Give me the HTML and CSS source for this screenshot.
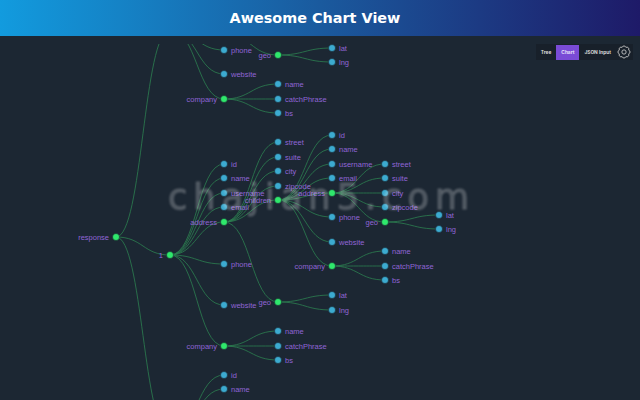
FILE: index.html
```html
<!DOCTYPE html>
<html lang="en">
<head>
<meta charset="utf-8">
<title>Awesome Chart View</title>
<link rel="stylesheet" href="styles.css">
</head>
<body>
<header class="topbar"><h1 class="title">Awesome Chart View</h1></header>
<main class="stage">
  <svg class="chart" viewBox="0 44 640 356" xmlns="http://www.w3.org/2000/svg">
    <g class="links">
      <path d="M116 237C143 237 143 30 170 30"/>
      <path d="M116 237C143 237 143 255 170 255"/>
      <path d="M116 237C143 237 143 434 170 434"/>
      <path d="M170 30C197 30 197 34 224 34"/>
      <path d="M170 30C197 30 197 50 224 50"/>
      <path d="M170 30C197 30 197 74 224 74"/>
      <path d="M170 30C197 30 197 99 224 99"/>
      <path d="M224 34C251 34 251 55 278 55"/>
      <path d="M278 55C305 55 305 48 332 48"/>
      <path d="M278 55C305 55 305 62 332 62"/>
      <path d="M224 99C251 99 251 84 278 84"/>
      <path d="M224 99C251 99 251 99 278 99"/>
      <path d="M224 99C251 99 251 113 278 113"/>
      <path d="M170 255C197 255 197 164 224 164"/>
      <path d="M170 255C197 255 197 178 224 178"/>
      <path d="M170 255C197 255 197 193 224 193"/>
      <path d="M170 255C197 255 197 207 224 207"/>
      <path d="M170 255C197 255 197 222 224 222"/>
      <path d="M170 255C197 255 197 264 224 264"/>
      <path d="M170 255C197 255 197 305 224 305"/>
      <path d="M170 255C197 255 197 346 224 346"/>
      <path d="M224 222C251 222 251 142 278 142"/>
      <path d="M224 222C251 222 251 157 278 157"/>
      <path d="M224 222C251 222 251 171 278 171"/>
      <path d="M224 222C251 222 251 186 278 186"/>
      <path d="M224 222C251 222 251 200 278 200"/>
      <path d="M224 222C251 222 251 302 278 302"/>
      <path d="M278 200C305 200 305 135 332 135"/>
      <path d="M278 200C305 200 305 149 332 149"/>
      <path d="M278 200C305 200 305 164 332 164"/>
      <path d="M278 200C305 200 305 178 332 178"/>
      <path d="M278 200C305 200 305 193 332 193"/>
      <path d="M278 200C305 200 305 217 332 217"/>
      <path d="M278 200C305 200 305 242 332 242"/>
      <path d="M278 200C305 200 305 266 332 266"/>
      <path d="M332 193C358.500 193 358.500 164 385 164"/>
      <path d="M332 193C358.500 193 358.500 178 385 178"/>
      <path d="M332 193C358.500 193 358.500 193 385 193"/>
      <path d="M332 193C358.500 193 358.500 207 385 207"/>
      <path d="M332 193C358.500 193 358.500 222 385 222"/>
      <path d="M385 222C412 222 412 215 439 215"/>
      <path d="M385 222C412 222 412 229 439 229"/>
      <path d="M332 266C358.500 266 358.500 251 385 251"/>
      <path d="M332 266C358.500 266 358.500 266 385 266"/>
      <path d="M332 266C358.500 266 358.500 280 385 280"/>
      <path d="M278 302C305 302 305 295 332 295"/>
      <path d="M278 302C305 302 305 310 332 310"/>
      <path d="M224 346C251 346 251 331 278 331"/>
      <path d="M224 346C251 346 251 346 278 346"/>
      <path d="M224 346C251 346 251 360 278 360"/>
      <path d="M170 434C197 434 197 375 224 375"/>
      <path d="M170 434C197 434 197 389 224 389"/>
    </g>
    <g class="branches">
      <circle cx="116" cy="237" r="3.500"/><circle cx="170" cy="255" r="3.500"/>
      <circle cx="278" cy="55" r="3.500"/><circle cx="224" cy="99" r="3.500"/>
      <circle cx="224" cy="222" r="3.500"/><circle cx="278" cy="200" r="3.500"/>
      <circle cx="332" cy="193" r="3.500"/><circle cx="385" cy="222" r="3.500"/>
      <circle cx="332" cy="266" r="3.500"/><circle cx="278" cy="302" r="3.500"/>
      <circle cx="224" cy="346" r="3.500"/>
    </g>
    <g class="leaves">
      <circle cx="224" cy="50" r="3.500"/><circle cx="224" cy="74" r="3.500"/>
      <circle cx="332" cy="48" r="3.500"/><circle cx="332" cy="62" r="3.500"/>
      <circle cx="278" cy="84" r="3.500"/><circle cx="278" cy="99" r="3.500"/><circle cx="278" cy="113" r="3.500"/>
      <circle cx="224" cy="164" r="3.500"/><circle cx="224" cy="178" r="3.500"/><circle cx="224" cy="193" r="3.500"/><circle cx="224" cy="207" r="3.500"/>
      <circle cx="224" cy="264" r="3.500"/><circle cx="224" cy="305" r="3.500"/>
      <circle cx="278" cy="142" r="3.500"/><circle cx="278" cy="157" r="3.500"/><circle cx="278" cy="171" r="3.500"/><circle cx="278" cy="186" r="3.500"/>
      <circle cx="332" cy="135" r="3.500"/><circle cx="332" cy="149" r="3.500"/><circle cx="332" cy="164" r="3.500"/><circle cx="332" cy="178" r="3.500"/>
      <circle cx="332" cy="217" r="3.500"/><circle cx="332" cy="242" r="3.500"/>
      <circle cx="385" cy="164" r="3.500"/><circle cx="385" cy="178" r="3.500"/><circle cx="385" cy="193" r="3.500"/><circle cx="385" cy="207" r="3.500"/>
      <circle cx="439" cy="215" r="3.500"/><circle cx="439" cy="229" r="3.500"/>
      <circle cx="385" cy="251" r="3.500"/><circle cx="385" cy="266" r="3.500"/><circle cx="385" cy="280" r="3.500"/>
      <circle cx="332" cy="295" r="3.500"/><circle cx="332" cy="310" r="3.500"/>
      <circle cx="278" cy="331" r="3.500"/><circle cx="278" cy="346" r="3.500"/><circle cx="278" cy="360" r="3.500"/>
      <circle cx="224" cy="375" r="3.500"/><circle cx="224" cy="389" r="3.500"/>
    </g>
    <g class="labels">
      <text x="231" y="52.500">phone</text><text x="231" y="76.500">website</text>
      <text x="339" y="50.500">lat</text><text x="339" y="64.500">lng</text>
      <text x="285" y="86.500">name</text><text x="285" y="101.500">catchPhrase</text><text x="285" y="115.500">bs</text>
      <text x="231" y="166.500">id</text><text x="231" y="180.500">name</text><text x="231" y="195.500">username</text><text x="231" y="209.500">email</text>
      <text x="231" y="266.500">phone</text><text x="231" y="307.500">website</text>
      <text x="285" y="144.500">street</text><text x="285" y="159.500">suite</text><text x="285" y="173.500">city</text><text x="285" y="188.500">zipcode</text>
      <text x="339" y="137.500">id</text><text x="339" y="151.500">name</text><text x="339" y="166.500">username</text><text x="339" y="180.500">email</text>
      <text x="339" y="219.500">phone</text><text x="339" y="244.500">website</text>
      <text x="392" y="166.500">street</text><text x="392" y="180.500">suite</text><text x="392" y="195.500">city</text><text x="392" y="209.500">zipcode</text>
      <text x="446" y="217.500">lat</text><text x="446" y="231.500">lng</text>
      <text x="392" y="253.500">name</text><text x="392" y="268.500">catchPhrase</text><text x="392" y="282.500">bs</text>
      <text x="339" y="297.500">lat</text><text x="339" y="312.500">lng</text>
      <text x="285" y="333.500">name</text><text x="285" y="348.500">catchPhrase</text><text x="285" y="362.500">bs</text>
      <text x="231" y="377.500">id</text><text x="231" y="391.500">name</text>
    </g>
    <g class="labels labels-end">
      <text x="109" y="239.500">response</text><text x="163" y="257.500">1</text>
      <text x="271" y="57.500">geo</text><text x="217" y="101.500">company</text>
      <text x="217" y="224.500">address</text><text x="271" y="202.500">children</text>
      <text x="325" y="195.500">address</text><text x="378" y="224.500">geo</text>
      <text x="325" y="268.500">company</text><text x="271" y="304.500">geo</text>
      <text x="217" y="348.500">company</text>
    </g>
  </svg>
  <nav class="toolbar">
    <span class="tab">Tree</span>
    <span class="tab tab-active">Chart</span>
    <span class="tab">JSON Input</span>
    <svg class="gear" viewBox="0 0 24 24" xmlns="http://www.w3.org/2000/svg"><path d="M14.870 5.070A3 3 0 0 1 18.930 9.130A3 3 0 0 1 18.930 14.870A3 3 0 0 1 14.870 18.930A3 3 0 0 1 9.130 18.930A3 3 0 0 1 5.070 14.870A3 3 0 0 1 5.070 9.130A3 3 0 0 1 9.130 5.070A3 3 0 0 1 14.870 5.070Z"/><circle cx="12" cy="12" r="3.200"/></svg>
  </nav>
  <div class="watermark">chajian5.com</div>
</main>
</body>
</html>
```
FILE: styles.css
```css
html, body { margin: 0; height: 100%; }
body {
  width: 640px; height: 400px; overflow: hidden;
  display: flex; flex-direction: column;
  background: #1c2733;
}
.topbar {
  height: 36px; flex: none; box-sizing: border-box; padding-right: 10px;
  display: flex; align-items: center; justify-content: center;
  background: linear-gradient(90deg, #129bde 0%, #1a5a9e 50%, #1e1a68 100%);
}
.title {
  margin: 0; color: #fff;
  font: 700 14.400px "DejaVu Sans", sans-serif;
}
.stage { position: relative; flex: 1; padding-top: 8px; overflow: hidden; }
.chart { display: block; width: 640px; height: 356px; }
.links path { fill: none; stroke: #2c8050; stroke-width: 0.8; }
.branches circle { fill: #2fe86c; stroke: #16222b; stroke-width: 0.6; }
.leaves circle { fill: #3cabd0; stroke: #16222b; stroke-width: 0.6; }
.labels text { fill: #9065d6; font: 7.500px "Liberation Sans", Arial, sans-serif; }
.labels-end text { text-anchor: end; }
.toolbar {
  position: absolute; top: 8px; right: 7px;
  display: flex; align-items: center;
  height: 16px; background: #18202a;
  font: 700 4.800px Inter, sans-serif; color: #d8d8d8;
}
.tab { height: 15px; display: flex; align-items: center; padding: 0 5px; }
.tab-active { background: #7a4bd6; color: #e8e0fa; }
.gear { width: 16px; height: 16px; margin: 0 1px 0 0; }
.gear path, .gear circle { fill: none; stroke: #c8c8c8; stroke-width: 1.300; }
.watermark {
  position: absolute; left: 168px; top: 141px;
  font: 400 35px "DejaVu Sans", sans-serif;
  letter-spacing: 6.100px; white-space: nowrap;
  color: rgba(255, 255, 255, 0.2);
  -webkit-text-stroke: 1px rgba(255, 255, 255, 0.2);
  filter: blur(0.9px);
  pointer-events: none;
}
```
